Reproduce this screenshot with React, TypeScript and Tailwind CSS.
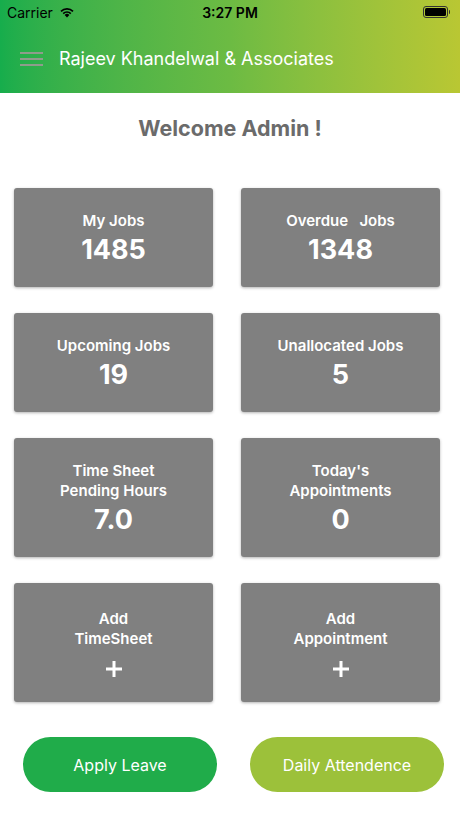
import React from "react";

const font = { fontFamily: "Inter, 'Noto Sans', sans-serif" };

function Card({ lines, value, tall }: { lines: string[]; value: string; tall?: boolean }) {
  return (
    <div
      className={`flex flex-col items-center justify-center rounded-[3px] bg-[#808080] text-white shadow-[0_1px_3px_rgba(0,0,0,0.3)] ${
        tall ? "h-[119px]" : "h-[99px]"
      }`}
    >
      {lines.map((l, i) => (
        <div key={i} className="text-[15px] font-semibold leading-[20px] whitespace-pre">
          {l}
        </div>
      ))}
      <div className="mt-[4px] text-[27px] font-bold leading-[30px]">{value}</div>
    </div>
  );
}

function PlusCard({ lines }: { lines: string[] }) {
  return (
    <div className="flex h-[119px] flex-col items-center justify-center rounded-[3px] bg-[#808080] text-white shadow-[0_1px_3px_rgba(0,0,0,0.3)]">
      {lines.map((l, i) => (
        <div key={i} className="text-[15px] font-semibold leading-[20px]">
          {l}
        </div>
      ))}
      <svg className="mt-[12px]" width="16" height="16" viewBox="0 0 16 16">
        <rect x="6.5" y="0" width="3" height="16" fill="white" />
        <rect x="0" y="6.5" width="16" height="3" fill="white" />
      </svg>
    </div>
  );
}

export default function App() {
  return (
    <div className="h-[818px] w-[460px] overflow-hidden bg-white" style={font}>
      <div className="h-[93px] bg-gradient-to-r from-[#16ad4c] via-[#6cbb43] to-[#b9c733]">
        <div className="relative flex h-[24px] items-center px-[7px] text-[14px] text-black">
          <span className="font-normal">Carrier</span>
          <svg className="ml-[6px]" width="16" height="12" viewBox="0 0 16 12">
            <path d="M8 11.5 L5.6 9 A3.4 3.4 0 0 1 10.4 9 Z" fill="black" />
            <path d="M3.6 7 A6.2 6.2 0 0 1 12.4 7 L11.2 8.2 A4.5 4.5 0 0 0 4.8 8.2 Z" fill="black" />
            <path d="M1.4 4.8 A9.3 9.3 0 0 1 14.6 4.8 L13.4 6 A7.6 7.6 0 0 0 2.6 6 Z" fill="black" />
          </svg>
          <span className="absolute left-1/2 -translate-x-1/2 font-semibold">3:27 PM</span>
          <div className="ml-auto mr-[3px] flex items-center">
            <div className="flex h-[12px] w-[25px] items-center rounded-[3px] border border-[#333] p-[1px]">
              <div className="h-full w-full rounded-[1.5px] bg-black" />
            </div>
            <div className="ml-[1px] h-[4px] w-[1.5px] rounded-r bg-[#333]" />
          </div>
        </div>
        <div className="flex h-[69px] items-center pl-[20px]">
          <div className="flex w-[23px] flex-col gap-[4px]">
            <div className="h-[2px] bg-[#8f9c8c]" />
            <div className="h-[2px] bg-[#8f9c8c]" />
            <div className="h-[2px] bg-[#8f9c8c]" />
          </div>
          <span className="ml-[16px] text-[18px] text-white">Rajeev Khandelwal &amp; Associates</span>
        </div>
      </div>

      <div className="pt-[22px] text-center text-[21.5px] font-bold leading-[26px] text-[#6b6b6b]">
        Welcome Admin !
      </div>

      <div className="mt-[47px] grid grid-cols-2 gap-x-[28px] gap-y-[26px] pl-[14px] pr-[20px]">
        <Card lines={["My Jobs"]} value="1485" />
        <Card lines={["Overdue   Jobs"]} value="1348" />
        <Card lines={["Upcoming Jobs"]} value="19" />
        <Card lines={["Unallocated Jobs"]} value="5" />
        <Card lines={["Time Sheet", "Pending Hours"]} value="7.0" tall />
        <Card lines={["Today's", "Appointments"]} value="0" tall />
        <PlusCard lines={["Add", "TimeSheet"]} />
        <PlusCard lines={["Add", "Appointment"]} />
      </div>

      <div className="mt-[35px] flex justify-between pl-[23px] pr-[16px]">
        <button className="flex h-[55px] w-[194px] items-center justify-center rounded-full bg-[#20ac4a] text-[16px] text-white">
          Apply Leave
        </button>
        <button className="flex h-[55px] w-[194px] items-center justify-center rounded-full bg-[#9cc13a] text-[16px] text-white">
          Daily Attendence
        </button>
      </div>
    </div>
  );
}
